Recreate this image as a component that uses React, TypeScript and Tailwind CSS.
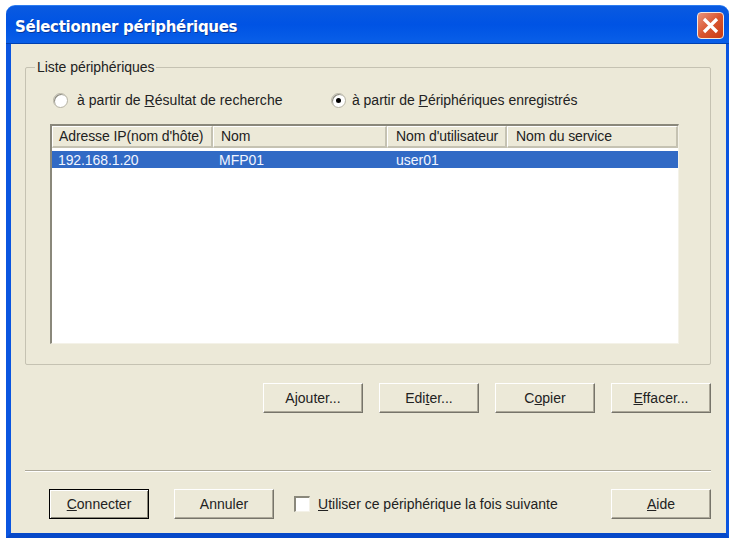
const font = { fontFamily: '"Liberation Sans", Arial, sans-serif' }

function XpButton({ label, under, rest, pre = "", def = false, className = "" }: { label?: string; under?: string; rest?: string; pre?: string; def?: boolean; className?: string }) {
  return (
    <button
      className={`h-[30px] w-[100px] bg-[#ece9d8] text-[14px] leading-none text-[#222] flex items-center justify-center border ${
        def
          ? "border-black shadow-[inset_1px_1px_0_#fff,inset_-1px_-1px_0_#8a8778]"
          : "border-t-[#fff] border-l-[#fff] border-r-[#76746a] border-b-[#76746a] shadow-[inset_-1px_-1px_0_#aca899]"
      } ${className}`}
    >
      {label}
      {pre}
      {under && <span className="underline">{under}</span>}
      {rest}
    </button>
  )
}

function Radio({ checked, className = "" }: { checked?: boolean; className?: string }) {
  return (
    <span className={`w-[15px] h-[15px] rounded-full bg-white border border-[#b5b2a3] flex items-center justify-center shrink-0 shadow-[inset_1px_1px_0_#8f8d80] ${className}`}>
      {checked && <span className="w-[5px] h-[5px] rounded-full bg-black" />}
    </span>
  )
}

function HeaderCell({ children, className = "" }: { children: string; className?: string }) {
  return (
    <div className={`h-[22px] flex items-center bg-[#ece9d8] border-t border-l border-t-white border-l-white border-r-2 border-b-2 border-r-[#c5c2b2] border-b-[#c5c2b2] whitespace-nowrap overflow-hidden tracking-[-0.1px] ${className}`}>
      {children}
    </div>
  )
}

export default function App() {
  return (
    <div className="w-[732px] h-[540px] bg-white pt-[5px] pl-[6px] text-[14px] text-[#222]" style={font}>
      <div className="w-[723px] h-[533px] flex flex-col">
        {/* barre de titre */}
        <div className="h-[39px] shrink-0 rounded-t-[9px] bg-gradient-to-b from-[#0a5ae0] via-[#0053e4] to-[#0a5fe8] border-t border-t-[#2b7cf0] flex items-center justify-between pl-[9px] pr-[5px] border-b border-b-[#0040b0]">
          <span className="text-white font-bold text-[15px] tracking-[-0.3px] pt-[6px] [text-shadow:1px_1px_0_#0a3a9a]" style={{ fontFamily: '"DejaVu Sans", sans-serif' }}>
            Sélectionner périphériques
          </span>
          <div className="w-[27px] h-[27px] rounded-[4px] border border-[#f3e6df] bg-gradient-to-br from-[#e8927a] via-[#d9552f] to-[#c93a12] flex items-center justify-center mt-[2px]">
            <svg width="19" height="19" viewBox="0 0 19 19">
              <path d="M3 3 L16 16 M16 3 L3 16" stroke="#fff" strokeWidth="3.2" />
            </svg>
          </div>
        </div>

        {/* corps */}
        <div className="flex-1 bg-[#ece9d8] border-l-[5px] border-r-[3px] border-b-[5px] border-l-[#0a55e0] border-r-[#0a55e0] border-b-[#0648c8] pl-[14px] pr-[15px] pt-[23px] flex flex-col">
          {/* groupe */}
          <div className="relative h-[298px] border border-[#c5c2b2] rounded-[2px] pl-[24px] pr-[31px] pt-[24px]">
            <span className="absolute left-[9px] top-[-9px] bg-[#ece9d8] px-[2px] leading-[17px] tracking-[-0.05px]">Liste périphériques</span>
            <div className="flex items-center h-[17px]">
              <Radio className="ml-[3px]" />
              <span className="ml-[9px] w-[254px] whitespace-nowrap tracking-[0.05px]">
                à partir de <span className="underline">R</span>ésultat de recherche
              </span>
              <Radio checked />
              <span className="ml-[6px] whitespace-nowrap tracking-[-0.03px]">
                à partir de <span className="underline">P</span>ériphériques enregistrés
              </span>
            </div>

            {/* liste */}
            <div className="mt-[15px] h-[220px] bg-white border-t-2 border-l-2 border-t-[#8a887b] border-l-[#8a887b] border-r border-b border-r-[#f4f2e8] border-b-[#f4f2e8]">
              <div className="grid grid-cols-[161px_174px_120px_171px]">
                <HeaderCell className="pl-[6px]">Adresse IP(nom d'hôte)</HeaderCell>
                <HeaderCell className="pl-[7px]">Nom</HeaderCell>
                <HeaderCell className="pl-[8px]">Nom d'utilisateur</HeaderCell>
                <HeaderCell className="pl-[8px]">Nom du service</HeaderCell>
              </div>
              <div className="mt-[3px] h-[17px] bg-[#316ac5] text-[#f2f5ff] grid grid-cols-[161px_174px_120px_171px] items-center leading-none">
                <span className="pl-[6px] tracking-[-0.1px]">192.168.1.20</span>
                <span className="pl-[6px]">MFP01</span>
                <span className="pl-[9px]">user01</span>
              </div>
            </div>
          </div>

          {/* boutons de la liste */}
          <div className="mt-[18px] flex justify-end gap-[16px]">
            <XpButton label="Ajouter..." />
            <XpButton pre="Edi" under="t" rest="er..." />
            <XpButton pre="C" under="o" rest="pier" />
            <XpButton under="E" rest="ffacer..." />
          </div>

          <div className="mt-[57px] border-t border-t-[#aca899] shadow-[0_1px_0_#fff]" />

          {/* boutons du bas */}
          <div className="mt-[18px] flex items-center pl-[24px]">
            <XpButton under="C" rest="onnecter" def />
            <XpButton label="Annuler" className="ml-[25px]" />
            <span className="ml-[20px] w-[16px] h-[16px] bg-white border-t-2 border-l-2 border-t-[#8a887b] border-l-[#8a887b] border-r border-b border-r-[#f4f2e8] border-b-[#f4f2e8] shrink-0" />
            <span className="ml-[8px] whitespace-nowrap">
              <span className="underline">U</span>tiliser ce périphérique la fois suivante
            </span>
            <XpButton under="A" rest="ide" className="ml-auto" />
          </div>
        </div>
      </div>
    </div>
  )
}
